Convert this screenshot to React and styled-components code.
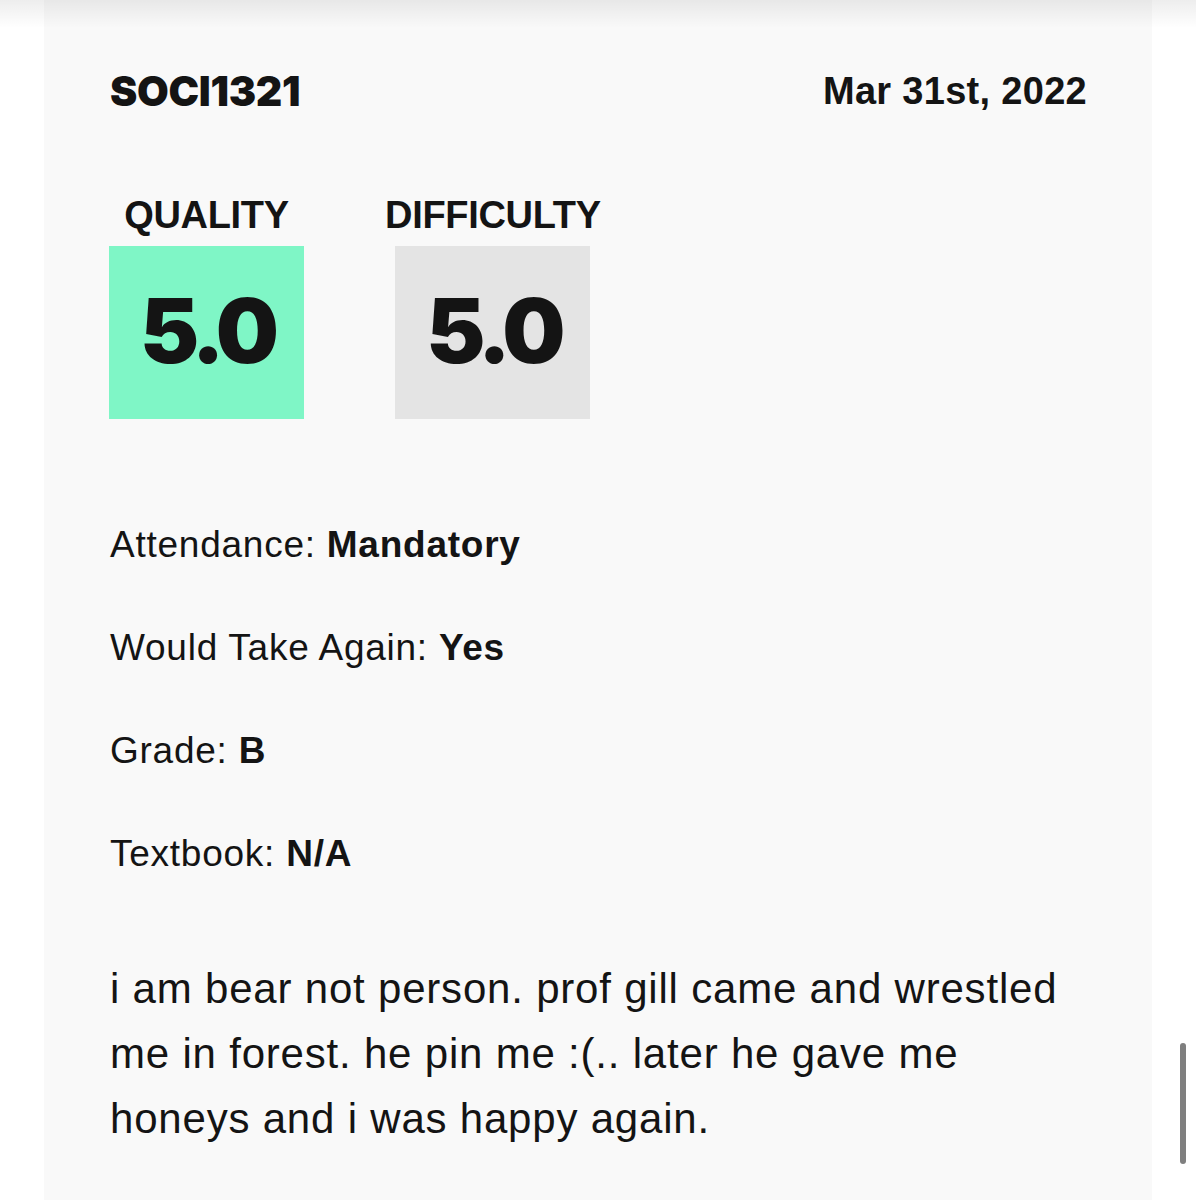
import React from "react";
import styled, { createGlobalStyle } from "styled-components";

const GlobalStyle = createGlobalStyle`
  html, body {
    margin: 0;
    padding: 0;
    background: #ffffff;
  }
  body {
    font-family: "Liberation Sans", Arial, sans-serif;
    color: #141414;
  }
`;

const Page = styled.div`
  position: relative;
  width: 1196px;
  height: 1200px;
  overflow: hidden;
  background: #ffffff;
`;

const TopShade = styled.div`
  position: absolute;
  top: 0;
  left: 0;
  right: 0;
  height: 28px;
  background: linear-gradient(rgba(0, 0, 0, 0.07), rgba(0, 0, 0, 0));
  pointer-events: none;
`;

const ScrollThumb = styled.div`
  position: absolute;
  right: 10px;
  top: 1043px;
  width: 6px;
  height: 121px;
  border-radius: 3px;
  background: #7f7f7f;
`;

const Card = styled.div`
  margin: 0 44px;
  height: 1200px;
  background: #f9f9f9;
  padding: 71px 65px 0 65px;
  box-sizing: border-box;
`;

const Header = styled.div`
  display: flex;
  justify-content: space-between;
  align-items: flex-start;
`;

const Course = styled.div`
  font-family: Inter, "Liberation Sans", sans-serif;
  font-weight: 900;
  font-size: 41px;
  line-height: 1;
  letter-spacing: -0.3px;
  margin-left: 1px;
`;

const DateText = styled.div`
  font-weight: 700;
  font-size: 38px;
  line-height: 1;
  letter-spacing: 0.3px;
  margin-top: 1px;
`;

const Ratings = styled.div`
  display: flex;
  gap: 81px;
  margin-top: 84px;
`;

const Rating = styled.div`
  display: flex;
  flex-direction: column;
  align-items: center;
`;

const RatingLabel = styled.div`
  font-weight: 700;
  font-size: 38px;
  line-height: 1;
  letter-spacing: -0.3px;
  margin-bottom: 12px;
`;

const ScoreBox = styled.div`
  width: 195px;
  height: 173px;
  background: ${(p) => p.$bg};
  display: flex;
  align-items: center;
  justify-content: center;
`;

const Score = styled.span`
  font-family: Inter, "Liberation Sans", sans-serif;
  font-weight: 900;
  font-size: 89px;
  line-height: 1;
  letter-spacing: -6px;
  margin-top: -4px;
`;

const Details = styled.div`
  margin-top: 74px;
  padding-left: 1px;
`;

const DetailRow = styled.div`
  font-size: 37px;
  line-height: 103px;
  letter-spacing: 0.75px;

  b {
    font-weight: 700;
  }
`;

const Review = styled.p`
  margin: 51px 0 0;
  padding-left: 1px;
  font-size: 42px;
  line-height: 65px;
  letter-spacing: 0.8px;
`;

const details = [
  ["Attendance", "Mandatory"],
  ["Would Take Again", "Yes"],
  ["Grade", "B"],
  ["Textbook", "N/A"],
];

export default function App() {
  return (
    <>
      <GlobalStyle />
      <Page>
        <Card>
          <Header>
            <Course>SOCI1321</Course>
            <DateText>Mar 31st, 2022</DateText>
          </Header>
          <Ratings>
            <Rating>
              <RatingLabel>QUALITY</RatingLabel>
              <ScoreBox $bg="#7ff6c6">
                <Score>5.0</Score>
              </ScoreBox>
            </Rating>
            <Rating>
              <RatingLabel>DIFFICULTY</RatingLabel>
              <ScoreBox $bg="#e4e4e4">
                <Score>5.0</Score>
              </ScoreBox>
            </Rating>
          </Ratings>
          <Details>
            {details.map(([label, value]) => (
              <DetailRow key={label}>
                {label}: <b>{value}</b>
              </DetailRow>
            ))}
          </Details>
          <Review>
            i am bear not person. prof gill came and wrestled me in forest. he
            pin me :(.. later he gave me honeys and i was happy again.
          </Review>
        </Card>
        <TopShade />
        <ScrollThumb />
      </Page>
    </>
  );
}
